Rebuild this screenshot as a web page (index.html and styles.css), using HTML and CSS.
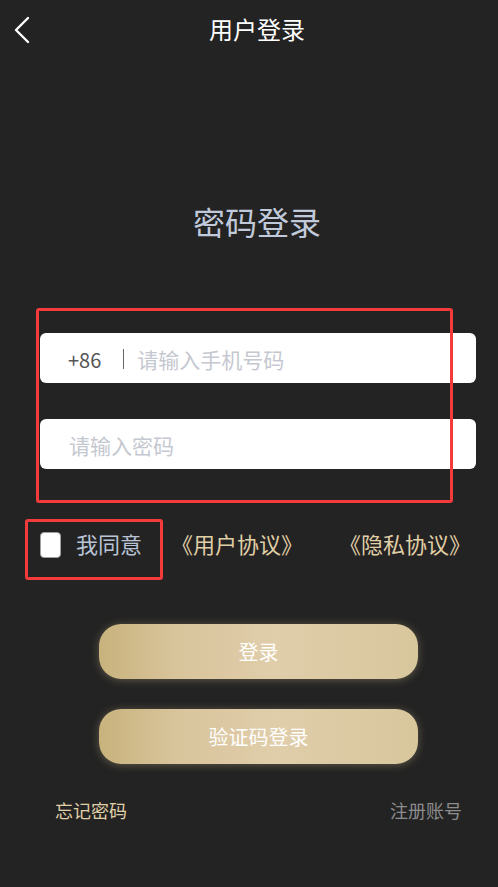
FILE: index.html
```html
<!DOCTYPE html>
<html lang="zh-CN">

<head>
  <meta charset="UTF-8">
  <meta name="viewport" content="width=device-width, initial-scale=1.0">
  <title>用户登录</title>
  <link rel="stylesheet" href="styles.css">
</head>

<body>
  <!-- 顶部导航 -->
  <div class="header">
    <a class="back" href="#">
      <svg width="20" height="30" viewBox="0 0 20 30">
        <polyline points="14,3 2,15 14,27" fill="none" stroke="#ffffff" stroke-width="2.4" stroke-linecap="round" stroke-linejoin="round" />
      </svg>
    </a>
    <div class="headerTitle">用户登录</div>
  </div>

  <div class="title">密码登录</div>

  <!-- 表单 -->
  <div class="form">
    <div class="field">
      <span class="prefix">+86</span>
      <span class="divider"></span>
      <input type="text" placeholder="请输入手机号码">
    </div>
    <div class="field">
      <input type="password" class="pwd" placeholder="请输入密码">
    </div>
    <div class="mark markForm"></div>
  </div>

  <div class="agree">
    <label class="check">
      <span class="box"></span>
      <span class="agreeText">我同意</span>
    </label>
    <a class="protocol" href="#">《用户协议》</a>
    <a class="protocol privacy" href="#">《隐私协议》</a>
    <div class="mark markCheck"></div>
  </div>

  <div class="btns">
    <div class="btn">登录</div>
    <div class="btn">验证码登录</div>
  </div>

  <div class="footer">
    <a class="forget" href="#">忘记密码</a>
    <a class="register" href="#">注册账号</a>
  </div>
</body>

</html>
```

FILE: styles.css
```css
body {
  margin: 0;
  background-color: #232323;
  font-family: "Noto Sans CJK SC", "Noto Sans", sans-serif;
  color: #ffffff;
}

a {
  text-decoration: none;
}

.header {
  position: relative;
  height: 58px;
  display: flex;
  align-items: center;
  justify-content: center;
}

.header .back {
  position: absolute;
  left: 14px;
  top: 15px;
  display: block;
  width: 20px;
  height: 30px;
}

.headerTitle {
  font-size: 24px;
  line-height: 58px;
  margin-left: 16px;
}

.title {
  margin-top: 143px;
  font-size: 32px;
  line-height: 40px;
  text-align: center;
  color: #c0cadb;
  padding-left: 16px;
}

.form {
  position: relative;
  margin-top: 92px;
  margin-left: 40px;
  width: 436px;
}

.field {
  display: flex;
  align-items: center;
  height: 50px;
  background-color: #ffffff;
  border-radius: 6px;
  margin-bottom: 36px;
}

.field:last-of-type {
  margin-bottom: 0;
}

.prefix {
  margin-left: 28px;
  font-size: 20px;
  color: #555555;
  margin-top: 2px;
}

.divider {
  width: 1px;
  height: 20px;
  background-color: #666666;
  margin-left: 22px;
  margin-right: 13px;
  margin-top: 2px;
}

.field input {
  flex: 1;
  border: none;
  outline: none;
  background: transparent;
  font-family: "Noto Sans CJK SC", "Noto Sans", sans-serif;
  font-size: 21px;
  color: #333333;
  padding: 0;
  margin-top: 2px;
}

.field input.pwd {
  margin-left: 29px;
}

.field input::placeholder {
  color: #c5c8d0;
}

/* 红色标注框 */
.mark {
  position: absolute;
  border: 3px solid #f43b3b;
  border-radius: 3px;
  box-sizing: border-box;
  pointer-events: none;
}

.markForm {
  left: -4px;
  top: -25px;
  width: 417px;
  height: 195px;
}

.agree {
  position: relative;
  display: flex;
  align-items: center;
  height: 40px;
  margin-top: 54px;
  padding-left: 40px;
  font-size: 22px;
}

.check {
  display: flex;
  align-items: center;
}

.box {
  width: 21px;
  height: 26px;
  box-sizing: border-box;
  background-color: #ffffff;
  border: 1px solid #a0a0a0;
  border-radius: 4px;
  margin-top: 3px;
}

.agreeText {
  margin-left: 15px;
  color: #b9c4d6;
}

.protocol {
  color: #e0cfa6;
  margin-left: 29px;
}

.protocol.privacy {
  margin-left: 36px;
}

.markCheck {
  left: 25px;
  top: -4px;
  width: 138px;
  height: 61px;
}

.btns {
  margin-top: 61px;
  margin-left: 99px;
  width: 319px;
}

.btn {
  height: 55px;
  line-height: 55px;
  border-radius: 22px;
  text-align: center;
  font-size: 20px;
  color: #ffffff;
  background: linear-gradient(to right, #c8b27c 0%, #d8c59c 25%, #e0cdaa 55%, #d8c79d 100%);
  box-shadow: 0 1px 8px rgba(215, 195, 145, 0.35);
  margin-bottom: 30px;
}

.btn:last-child {
  margin-bottom: 0;
}

.footer {
  display: flex;
  justify-content: space-between;
  margin-top: 34px;
  padding: 0 36px 0 55px;
  font-size: 18px;
  line-height: 24px;
}

.forget {
  color: #e0d0a8;
}

.register {
  color: #8c8c8c;
}
```
